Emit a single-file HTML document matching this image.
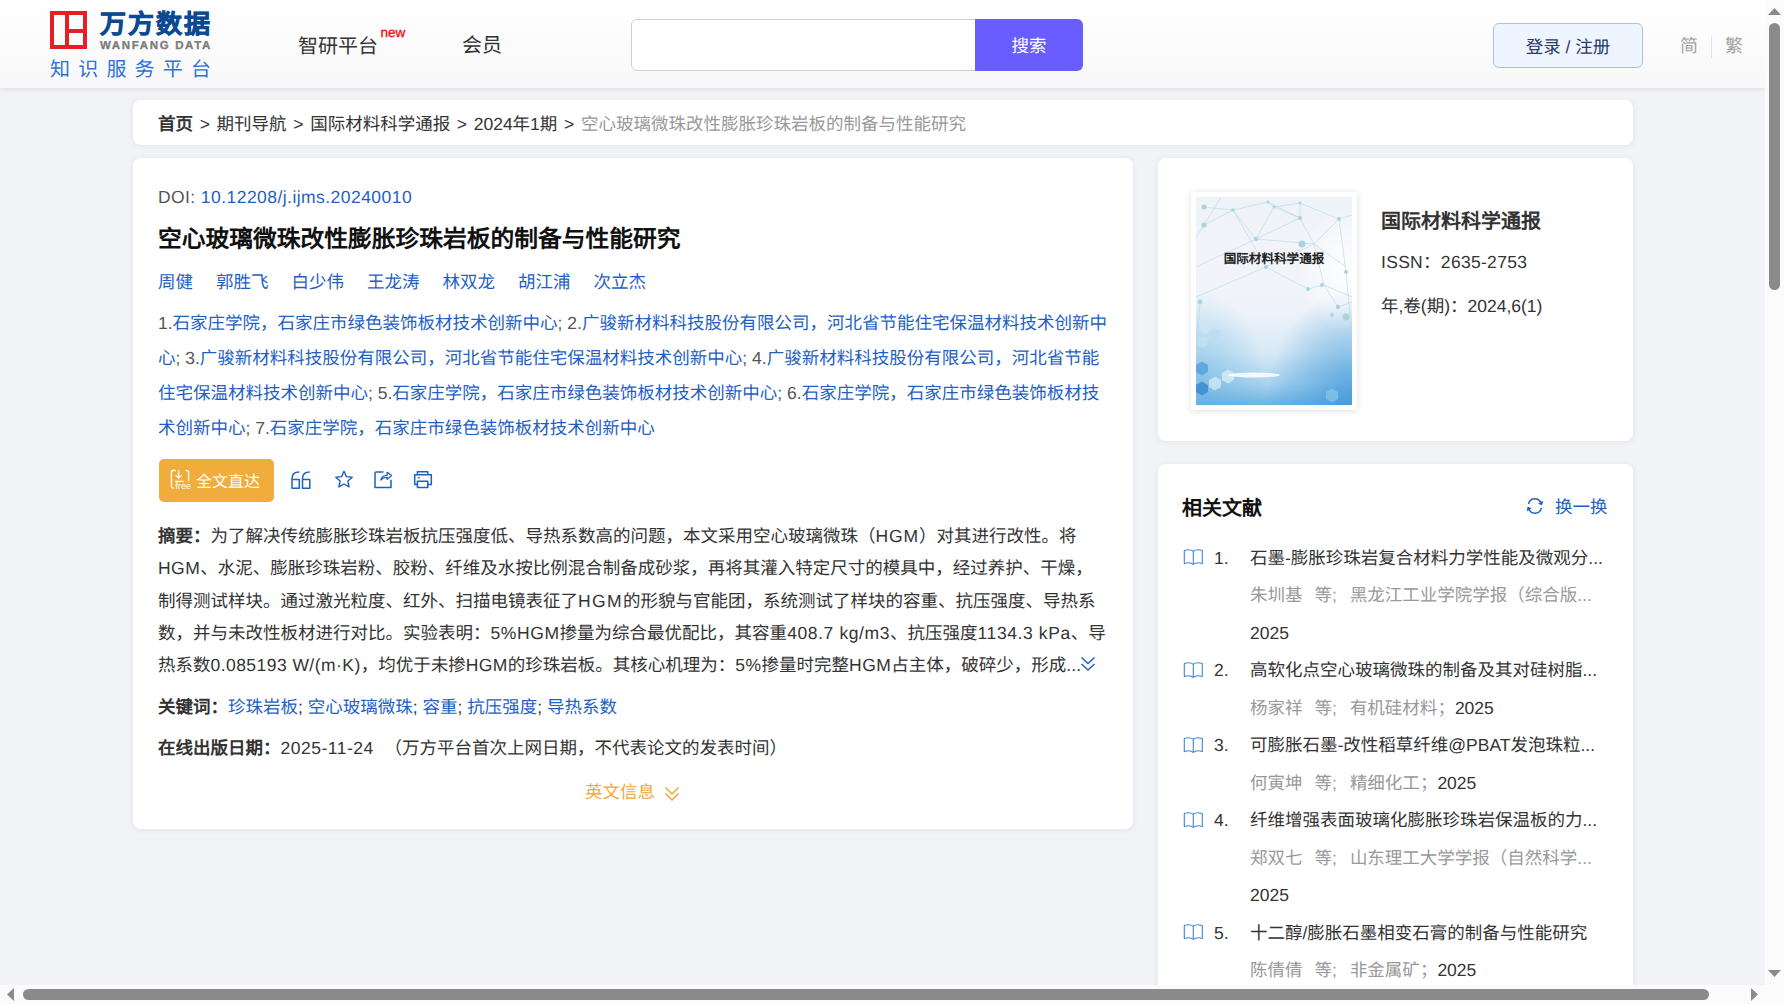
<!DOCTYPE html>
<html lang="zh-CN">
<head>
<meta charset="utf-8">
<style>
*{box-sizing:border-box;margin:0;padding:0}
html,body{width:1784px;height:1004px;overflow:hidden}
body{background:#f1f3f7;font-family:"Liberation Sans",sans-serif;text-rendering:geometricPrecision;color:#333;font-size:18px;position:relative}
.abs{position:absolute}
.nw{white-space:nowrap}
#header{position:absolute;left:0;top:0;width:1765px;height:88px;background:linear-gradient(#ffffff,#f8f8f9);box-shadow:0 1px 6px rgba(0,0,0,0.10)}
.card{position:absolute;background:#fff;border-radius:8px;box-shadow:0 1px 6px rgba(40,50,70,0.08)}
.blue{color:#1f5fc4}
.gray{color:#999}
.b{font-weight:bold}
.line{position:absolute;left:25px;white-space:nowrap}
.authors span{margin-right:23px}
.sep{margin:0 1.8px}
/* scrollbars */
#vsb{position:absolute;left:1765px;top:0;width:19px;height:1004px;background:#fbfbfb}
#hsb{position:absolute;left:0;top:985px;width:1784px;height:19px;background:#fbfbfb}
.thumb{position:absolute;background:#8a8a8a;border-radius:6px}
</style>
</head>
<body>

<div id="header">
  <!-- logo -->
  <div class="abs" style="left:50px;top:11px;width:37px;height:38px;border:4px solid #e61e25"></div>
  <div class="abs" style="left:65px;top:11px;width:4px;height:38px;background:#e61e25"></div>
  <div class="abs" style="left:69px;top:28.5px;width:15px;height:4px;background:#e61e25"></div>
  <div class="abs nw b" style="left:100px;top:8px;font-size:26px;line-height:32px;color:#0b4a92;letter-spacing:2px;-webkit-text-stroke:0.7px #0b4a92">万方数据</div>
  <div class="abs nw b" style="left:100px;top:39px;font-size:11.5px;line-height:14px;color:#7c7c7c;letter-spacing:1.65px;-webkit-text-stroke:0.3px #7c7c7c">WANFANG DATA</div>
  <div class="abs nw" style="left:50px;top:56.5px;font-size:20px;line-height:26px;color:#2f72d8;letter-spacing:8.2px">知识服务平台</div>

  <div class="abs nw" style="left:298px;top:31.5px;font-size:20px;line-height:30px;color:#333">智研平台</div>
  <div class="abs nw" style="left:380.5px;top:24.5px;font-size:13.5px;line-height:16px;color:#f00;-webkit-text-stroke:0.25px #f00">new</div>
  <div class="abs nw" style="left:462px;top:31px;font-size:20px;line-height:30px;color:#333">会员</div>

  <div class="abs" style="left:631px;top:19px;width:352px;height:52px;border:1px solid #cfcfcf;border-radius:6px 0 0 6px;background:#fff"></div>
  <div class="abs nw" style="left:975px;top:19px;width:108px;height:52px;background:#695dff;border-radius:0 6px 6px 0;color:#fff;font-size:17.5px;line-height:54px;text-align:center">搜索</div>

  <div class="abs nw" style="left:1493px;top:23px;width:150px;height:45px;background:#eef5fe;border:1px solid #a8c3ea;border-radius:6px;color:#2b3a66;font-size:17.5px;line-height:46px;text-align:center">登录 / 注册</div>
  <div class="abs nw" style="left:1680px;top:31px;font-size:18px;line-height:30px;color:#a3a3a3">简</div>
  <div class="abs" style="left:1711px;top:36px;width:1px;height:22px;background:#e3e3e3"></div>
  <div class="abs nw" style="left:1725px;top:31px;font-size:18px;line-height:30px;color:#a3a3a3">繁</div>
</div>

<!-- breadcrumb -->
<div class="card" style="left:133px;top:100px;width:1500px;height:45px">
  <div class="line" style="top:1.5px;line-height:45px;font-size:17.5px"><span class="b" style="color:#333">首页</span> <span class="sep">&gt;</span> 期刊导航 <span class="sep">&gt;</span> 国际材料科学通报 <span class="sep">&gt;</span> 2024年1期 <span class="sep">&gt;</span> <span class="gray">空心玻璃微珠改性膨胀珍珠岩板的制备与性能研究</span></div>
</div>

<!-- main card -->
<div class="card" id="main" style="left:133px;top:158px;width:1000px;height:671px">
  <div class="line" style="top:24px;line-height:30px;font-size:17.5px"><span style="color:#555;letter-spacing:0.4px">DOI: </span><span class="blue" style="letter-spacing:0.45px">10.12208/j.ijms.20240010</span></div>
  <div class="line b" style="top:64.5px;line-height:34px;font-size:23.75px;color:#111">空心玻璃微珠改性膨胀珍珠岩板的制备与性能研究</div>
  <div class="line blue authors" style="top:109px;line-height:30px;font-size:17.5px"><span>周健</span><span>郭胜飞</span><span>白少伟</span><span>王龙涛</span><span>林双龙</span><span>胡江浦</span><span>次立杰</span></div>
  <div class="line aff" style="top:147.5px;line-height:35px;font-size:17.5px;color:#555">1.<span class="blue">石家庄学院，石家庄市绿色装饰板材技术创新中心</span>; 2.<span class="blue">广骏新材料科技股份有限公司，河北省节能住宅保温材料技术创新中</span><br><span class="blue">心</span>; 3.<span class="blue">广骏新材料科技股份有限公司，河北省节能住宅保温材料技术创新中心</span>; 4.<span class="blue">广骏新材料科技股份有限公司，河北省节能</span><br><span class="blue">住宅保温材料技术创新中心</span>; 5.<span class="blue">石家庄学院，石家庄市绿色装饰板材技术创新中心</span>; 6.<span class="blue">石家庄学院，石家庄市绿色装饰板材技</span><br><span class="blue">术创新中心</span>; 7.<span class="blue">石家庄学院，石家庄市绿色装饰板材技术创新中心</span></div>

  <div class="abs" style="left:26px;top:301px;width:115px;height:43px;background:#f0ad3b;border-radius:5px"></div>
  <svg class="abs" style="left:37px;top:311px" width="24" height="22" viewBox="0 0 24 22">
    <path d="M5.8,1.5 H2.8 Q1.4,1.5 1.4,2.9 V17.6 Q1.4,19 2.8,19 H3.6" fill="none" stroke="#fff" stroke-width="1.3"/>
    <path d="M15.6,1.5 H17.2 Q18.6,1.5 18.6,2.9 V12.4" fill="none" stroke="#fff" stroke-width="1.3"/>
    <path d="M8.6,1 V9 M5.6,6.1 L8.6,9.1 L11.6,6.1 M5.2,12.3 H13.6" fill="none" stroke="#fff" stroke-width="1.3"/>
    <text x="5.3" y="20.2" font-family="Liberation Sans" font-size="9.2" fill="#fff">free</text>
  </svg>
  <div class="abs nw" style="left:63px;top:302.5px;line-height:43px;font-size:16px;color:#fff">全文直达</div>

  <svg class="abs" style="left:158px;top:313px" width="20" height="19" viewBox="0 0 20 19">
    <path d="M8.3,1 C4,1 1,2.8 1,7.5 V17.2 H8.3 V8.6 H1" fill="none" stroke="#1f5fc0" stroke-width="1.5" stroke-linejoin="round"/>
    <path d="M18.8,1 C14.5,1 11.5,2.8 11.5,7.5 V17.2 H18.8 V8.6 H11.5" fill="none" stroke="#1f5fc0" stroke-width="1.5" stroke-linejoin="round"/>
  </svg>
  <svg class="abs" style="left:201px;top:312px" width="20" height="20" viewBox="0 0 20 20">
    <path d="M10,1.3 L12.4,6.6 L18.2,7.2 L13.9,11.1 L15.1,16.9 L10,14 L4.9,16.9 L6.1,11.1 L1.8,7.2 L7.6,6.6 Z" fill="none" stroke="#1f5fc0" stroke-width="1.4" stroke-linejoin="round"/>
  </svg>
  <svg class="abs" style="left:240px;top:312px" width="20" height="20" viewBox="0 0 20 20">
    <path d="M10.5,2 H3.3 Q2,2 2,3.3 V17.4 H18 V9.8" fill="none" stroke="#1f5fc0" stroke-width="1.5" stroke-linejoin="round"/>
    <path d="M7.8,10 C8.6,7 10.5,5.5 14,5.4 L14.2,2.3 L18.6,5.6 L14.2,9.3 L14.1,7.4 C11.3,7.3 9.5,8 7.8,10 Z" fill="none" stroke="#1f5fc0" stroke-width="1.3" stroke-linejoin="round"/>
  </svg>
  <svg class="abs" style="left:280px;top:312px" width="20" height="20" viewBox="0 0 20 20">
    <path d="M4.4,4.8 V1.8 H14.8 V4.8" fill="none" stroke="#1f5fc0" stroke-width="1.5" stroke-linejoin="round"/>
    <path d="M4.4,14.5 H1.7 V4.8 H18.3 V14.5 H15" fill="none" stroke="#1f5fc0" stroke-width="1.5" stroke-linejoin="round"/>
    <path d="M4.4,11.3 H14.8 V17.6 H4.4 Z" fill="none" stroke="#1f5fc0" stroke-width="1.5" stroke-linejoin="round"/>
    <path d="M4.8,7.8 H6.8" stroke="#1f5fc0" stroke-width="1.3"/>
  </svg>

  <div class="line abst" style="top:361.8px;line-height:32.4px;font-size:17.5px;color:#333"><span class="b">摘要：</span>为了解决传统膨胀珍珠岩板抗压强度低、导热系数高的问题，本文采用空心玻璃微珠（<span style="letter-spacing:0.87px">HGM</span>）对其进行改性。将<br><span style="letter-spacing:0.47px">HGM</span>、水泥、膨胀珍珠岩粉、胶粉、纤维及水按比例混合制备成砂浆，再将其灌入特定尺寸的模具中，经过养护、干燥，<br>制得测试样块。通过激光粒度、红外、扫描电镜表征了<span style="letter-spacing:1.4px">HGM</span>的形貌与官能团，系统测试了样块的容重、抗压强度、导热系<br>数，并与未改性板材进行对比。实验表明：<span style="letter-spacing:0.6px">5%HGM</span>掺量为综合最优配比，其容重<span style="letter-spacing:0.6px">408.7 kg/m3</span>、抗压强度<span style="letter-spacing:0.6px">1134.3 kPa</span>、导<br>热系数<span style="letter-spacing:0.45px">0.085193 W/(m·K)</span>，均优于未掺<span style="letter-spacing:0.45px">HGM</span>的珍珠岩板。其核心机理为：<span style="letter-spacing:0.45px">5%</span>掺量时完整<span style="letter-spacing:0.45px">HGM</span>占主体，破碎少，形成<span style="letter-spacing:0.2px">...</span></div>
  <svg class="abs" style="left:947px;top:498px" width="16" height="16" viewBox="0 0 16 16">
    <path d="M1.5,1.5 L8,7.5 L14.5,1.5 M1.5,8 L8,14 L14.5,8" fill="none" stroke="#1f5fc4" stroke-width="1.5"/>
  </svg>

  <div class="line" style="top:534px;line-height:30px;font-size:17.5px;color:#333"><span class="b">关键词：</span><span class="blue">珍珠岩板</span>; <span class="blue">空心玻璃微珠</span>; <span class="blue">容重</span>; <span class="blue">抗压强度</span>; <span class="blue">导热系数</span></div>
  <div class="line" style="top:575px;line-height:30px;font-size:17.5px;color:#333"><span class="b">在线出版日期：</span><span style="letter-spacing:0.5px">2025-11-24 &nbsp;</span>（万方平台首次上网日期，不代表论文的发表时间）</div>
  <div class="abs nw" style="left:452px;top:619px;line-height:30px;font-size:17.5px;color:#efa83d">英文信息</div>
  <svg class="abs" style="left:531px;top:628px" width="16" height="16" viewBox="0 0 16 16">
    <path d="M1.5,1.5 L8,8 L14.5,1.5 M1.5,7.5 L8,14 L14.5,7.5" fill="none" stroke="#efa83d" stroke-width="1.5"/>
  </svg>
</div>

<!-- right card 1 -->
<div class="card" id="journal" style="left:1158px;top:158px;width:475px;height:283px">
  <div class="abs" style="left:33px;top:34px;width:166px;height:218px;background:#fff;box-shadow:0 1px 7px rgba(0,0,0,0.13)">
    <svg class="abs" style="left:5px;top:5px" width="156" height="208" viewBox="0 0 156 208">
      <defs>
        <linearGradient id="cg" x1="0" y1="0" x2="0" y2="1">
          <stop offset="0" stop-color="#edf3f8"/>
          <stop offset="0.3" stop-color="#f3f4f9"/>
          <stop offset="0.55" stop-color="#eef3f9"/>
          <stop offset="0.75" stop-color="#d6e9f6"/>
          <stop offset="0.9" stop-color="#a9d2ef"/>
          <stop offset="1" stop-color="#6db2e2"/>
        </linearGradient>
        <radialGradient id="rg" cx="1" cy="1" r="0.55">
          <stop offset="0" stop-color="#3f98d8" stop-opacity="0.85"/>
          <stop offset="1" stop-color="#3f98d8" stop-opacity="0"/>
        </radialGradient>
        <radialGradient id="rg2" cx="0" cy="0.9" r="0.45">
          <stop offset="0" stop-color="#5aaee0" stop-opacity="0.55"/>
          <stop offset="1" stop-color="#5aaee0" stop-opacity="0"/>
        </radialGradient>
        <radialGradient id="rg3" cx="0.95" cy="0.35" r="0.3">
          <stop offset="0" stop-color="#ffffff" stop-opacity="0.9"/>
          <stop offset="1" stop-color="#ffffff" stop-opacity="0"/>
        </radialGradient>
      </defs>
      <rect width="156" height="208" fill="url(#cg)"/>
      <rect width="156" height="208" fill="url(#rg)"/>
      <rect width="156" height="208" fill="url(#rg2)"/>
      <rect width="156" height="208" fill="url(#rg3)"/>
      <g stroke="#b3d9e2" stroke-width="0.6" fill="none">
        <path d="M8,10 L37,13 L72,5 L78,10 L104,6 L143,22 L156,18"/>
        <path d="M8,28 L37,13 L60,42 L78,10 L104,21 L118,47 L143,22"/>
        <path d="M0,70 L60,42 L104,21 L72,5"/>
        <path d="M8,28 L25,0 M37,13 L70,70 L118,47 L150,70 M104,6 L104,21"/>
        <path d="M60,42 L118,47 L128,88 L156,100"/>
        <path d="M0,100 L70,70 L112,92 L126,88"/>
        <path d="M143,22 L150,75 L156,140 M0,40 L8,28"/>
        <path d="M4,105 L0,150 M128,88 L142,110 L156,105"/>
      </g>
      <g fill="#a9d4de">
        <circle cx="8" cy="10" r="2.6"/><circle cx="37" cy="13" r="1.8"/><circle cx="72" cy="5" r="1.6"/><circle cx="78" cy="10" r="1.5"/>
        <circle cx="8" cy="28" r="2.6"/><circle cx="104" cy="21" r="2"/><circle cx="143" cy="22" r="2"/><circle cx="104" cy="6" r="1.4"/>
        <circle cx="60" cy="42" r="2.2"/><circle cx="106" cy="47" r="3.6"/><circle cx="70" cy="70" r="2"/>
        <circle cx="126" cy="88" r="2"/><circle cx="112" cy="92" r="2"/><circle cx="150" cy="75" r="2"/>
        <circle cx="4" cy="105" r="2.4"/><circle cx="142" cy="110" r="2.2"/><circle cx="150" cy="120" r="3.4"/>
        <circle cx="136" cy="118" r="2"/><circle cx="58" cy="56" r="1.6"/>
      </g>
      <g opacity="0.7">
        <path d="M4,128 l5,-3 l5,3 v6 l-5,3 l-5,-3z" fill="#d2e6f4"/>
        <path d="M14,134 l5,-3 l5,3 v6 l-5,3 l-5,-3z" fill="#bcdcf2"/>
        <path d="M2,142 l5,-3 l5,3 v6 l-5,3 l-5,-3z" fill="#c8e2f3"/>
        <path d="M0,168 l6,-3.5 l6,3.5 v7 l-6,3.5 l-6,-3.5z" fill="#4e9bd6"/>
        <path d="M0,188 l6,-3.5 l6,3.5 v7 l-6,3.5 l-6,-3.5z" fill="#2d80c8"/>
        <path d="M13,183 l6,-3.5 l6,3.5 v7 l-6,3.5 l-6,-3.5z" fill="#dcedf8"/>
        <path d="M26,176 l6,-3.5 l6,3.5 v7 l-6,3.5 l-6,-3.5z" fill="#e3f1f9"/>
        <path d="M130,195 l6,-3.5 l6,3.5 v7 l-6,3.5 l-6,-3.5z" fill="#8cc4ea"/>
      </g>
      <ellipse cx="58" cy="178" rx="26" ry="2.5" fill="#fff" opacity="0.85"/>
      <text x="78" y="66" text-anchor="middle" font-family="Liberation Sans" font-weight="bold" font-size="12.6" fill="#222">国际材料科学通报</text>
    </svg>
  </div>
  <div class="abs nw b" style="left:223px;top:48.5px;line-height:30px;font-size:20px;color:#333">国际材料科学通报</div>
  <div class="abs nw" style="left:223px;top:89px;line-height:30px;font-size:17.5px;color:#333;letter-spacing:0.3px">ISSN：2635-2753</div>
  <div class="abs nw" style="left:223px;top:133px;line-height:30px;font-size:17.5px;color:#333">年,卷(期)：2024,6(1)</div>
</div>

<!-- right card 2 -->
<div class="card" id="related" style="left:1158px;top:464px;width:475px;height:640px">
  <div class="abs nw b" style="left:24px;top:30px;line-height:30px;font-size:20px;color:#111">相关文献</div>
  <svg class="abs" style="left:368px;top:33px" width="18" height="18" viewBox="0 0 18 18"><path d="M15.2,7.2 C14.4,4 11.8,1.8 8.8,1.8 C5.8,1.8 3.2,4 2.4,7" fill="none" stroke="#1f5fc4" stroke-width="1.4"/><path d="M12.6,6.6 L16,7.6 L16.2,4" fill="#1f5fc4" stroke="#1f5fc4" stroke-width="1"/><path d="M2.6,10.8 C3.4,14 6,16.2 9,16.2 C12,16.2 14.6,14 15.4,11" fill="none" stroke="#1f5fc4" stroke-width="1.4"/><path d="M5.2,11.4 L1.8,10.4 L1.6,14" fill="#1f5fc4" stroke="#1f5fc4" stroke-width="1"/></svg>
  <div class="abs nw blue" style="left:397px;top:28px;line-height:30px;font-size:17.5px">换一换</div>
  <div class="abs" style="left:25px;top:75.5px;width:425px;line-height:37.5px;font-size:17.5px">
    <div class="item" style="position:relative;padding-left:67px"><svg class="abs" style="left:0;top:8.5px" width="22" height="18" viewBox="0 0 22 18"><path d="M10.3,3.2 C8,1.6 4.5,1.4 1.3,2.6 V15.6 C4.5,14.4 8,14.6 10.3,16.4 C12.6,14.6 16.1,14.4 19.3,15.6 V2.6 C16.1,1.4 12.6,1.6 10.3,3.2 V16.4" fill="none" stroke="#3e86df" stroke-width="1.1" stroke-linejoin="round"/></svg><span class="abs" style="left:31px;top:0;color:#333">1.</span><div class="nw" style="color:#333">石墨-膨胀珍珠岩复合材料力学性能及微观分...</div><div class="nw"><span class="gray">朱圳基</span><span class="gray" style="margin-left:12px">等;</span><span class="gray" style="margin-left:13px">黑龙江工业学院学报（综合版...</span></div><div class="nw" style="color:#333">2025</div></div>
    <div class="item" style="position:relative;padding-left:67px"><svg class="abs" style="left:0;top:8.5px" width="22" height="18" viewBox="0 0 22 18"><path d="M10.3,3.2 C8,1.6 4.5,1.4 1.3,2.6 V15.6 C4.5,14.4 8,14.6 10.3,16.4 C12.6,14.6 16.1,14.4 19.3,15.6 V2.6 C16.1,1.4 12.6,1.6 10.3,3.2 V16.4" fill="none" stroke="#3e86df" stroke-width="1.1" stroke-linejoin="round"/></svg><span class="abs" style="left:31px;top:0;color:#333">2.</span><div class="nw" style="color:#333">高软化点空心玻璃微珠的制备及其对硅树脂...</div><div class="nw"><span class="gray">杨家祥</span><span class="gray" style="margin-left:12px">等;</span><span class="gray" style="margin-left:13px">有机硅材料</span><span class="gray">；</span><span style="color:#333">2025</span></div></div>
    <div class="item" style="position:relative;padding-left:67px"><svg class="abs" style="left:0;top:8.5px" width="22" height="18" viewBox="0 0 22 18"><path d="M10.3,3.2 C8,1.6 4.5,1.4 1.3,2.6 V15.6 C4.5,14.4 8,14.6 10.3,16.4 C12.6,14.6 16.1,14.4 19.3,15.6 V2.6 C16.1,1.4 12.6,1.6 10.3,3.2 V16.4" fill="none" stroke="#3e86df" stroke-width="1.1" stroke-linejoin="round"/></svg><span class="abs" style="left:31px;top:0;color:#333">3.</span><div class="nw" style="color:#333">可膨胀石墨-改性稻草纤维@PBAT发泡珠粒...</div><div class="nw"><span class="gray">何寅坤</span><span class="gray" style="margin-left:12px">等;</span><span class="gray" style="margin-left:13px">精细化工</span><span class="gray">；</span><span style="color:#333">2025</span></div></div>
    <div class="item" style="position:relative;padding-left:67px"><svg class="abs" style="left:0;top:8.5px" width="22" height="18" viewBox="0 0 22 18"><path d="M10.3,3.2 C8,1.6 4.5,1.4 1.3,2.6 V15.6 C4.5,14.4 8,14.6 10.3,16.4 C12.6,14.6 16.1,14.4 19.3,15.6 V2.6 C16.1,1.4 12.6,1.6 10.3,3.2 V16.4" fill="none" stroke="#3e86df" stroke-width="1.1" stroke-linejoin="round"/></svg><span class="abs" style="left:31px;top:0;color:#333">4.</span><div class="nw" style="color:#333">纤维增强表面玻璃化膨胀珍珠岩保温板的力...</div><div class="nw"><span class="gray">郑双七</span><span class="gray" style="margin-left:12px">等;</span><span class="gray" style="margin-left:13px">山东理工大学学报（自然科学...</span></div><div class="nw" style="color:#333">2025</div></div>
    <div class="item" style="position:relative;padding-left:67px"><svg class="abs" style="left:0;top:8.5px" width="22" height="18" viewBox="0 0 22 18"><path d="M10.3,3.2 C8,1.6 4.5,1.4 1.3,2.6 V15.6 C4.5,14.4 8,14.6 10.3,16.4 C12.6,14.6 16.1,14.4 19.3,15.6 V2.6 C16.1,1.4 12.6,1.6 10.3,3.2 V16.4" fill="none" stroke="#3e86df" stroke-width="1.1" stroke-linejoin="round"/></svg><span class="abs" style="left:31px;top:0;color:#333">5.</span><div class="nw" style="color:#333">十二醇/膨胀石墨相变石膏的制备与性能研究</div><div class="nw"><span class="gray">陈倩倩</span><span class="gray" style="margin-left:12px">等;</span><span class="gray" style="margin-left:13px">非金属矿</span><span class="gray">；</span><span style="color:#333">2025</span></div></div>
  </div>
</div>

<!-- scrollbars -->
<div id="vsb">
  <svg class="abs" style="left:0;top:0" width="19" height="19"><polygon points="3,15 9.5,8 16,15" fill="#8a8a8a"/></svg>
  <div class="thumb" style="left:4px;top:23px;width:11px;height:267px"></div>
  <svg class="abs" style="left:0;top:960px" width="19" height="19"><polygon points="3,10 16,10 9.5,17" fill="#8a8a8a"/></svg>
</div>
<div id="hsb">
  <svg class="abs" style="left:0;top:0" width="19" height="19"><polygon points="14,3 14,16 7,9.5" fill="#8a8a8a"/></svg>
  <div class="thumb" style="left:23px;top:4px;width:1686px;height:11px"></div>
  <svg class="abs" style="left:1744px;top:0" width="19" height="19"><polygon points="7,3 7,16 14,9.5" fill="#8a8a8a"/></svg>
  <div class="abs" style="left:1765px;top:0;width:19px;height:19px;background:#fbfbfb"></div>
</div>

</body>
</html>
